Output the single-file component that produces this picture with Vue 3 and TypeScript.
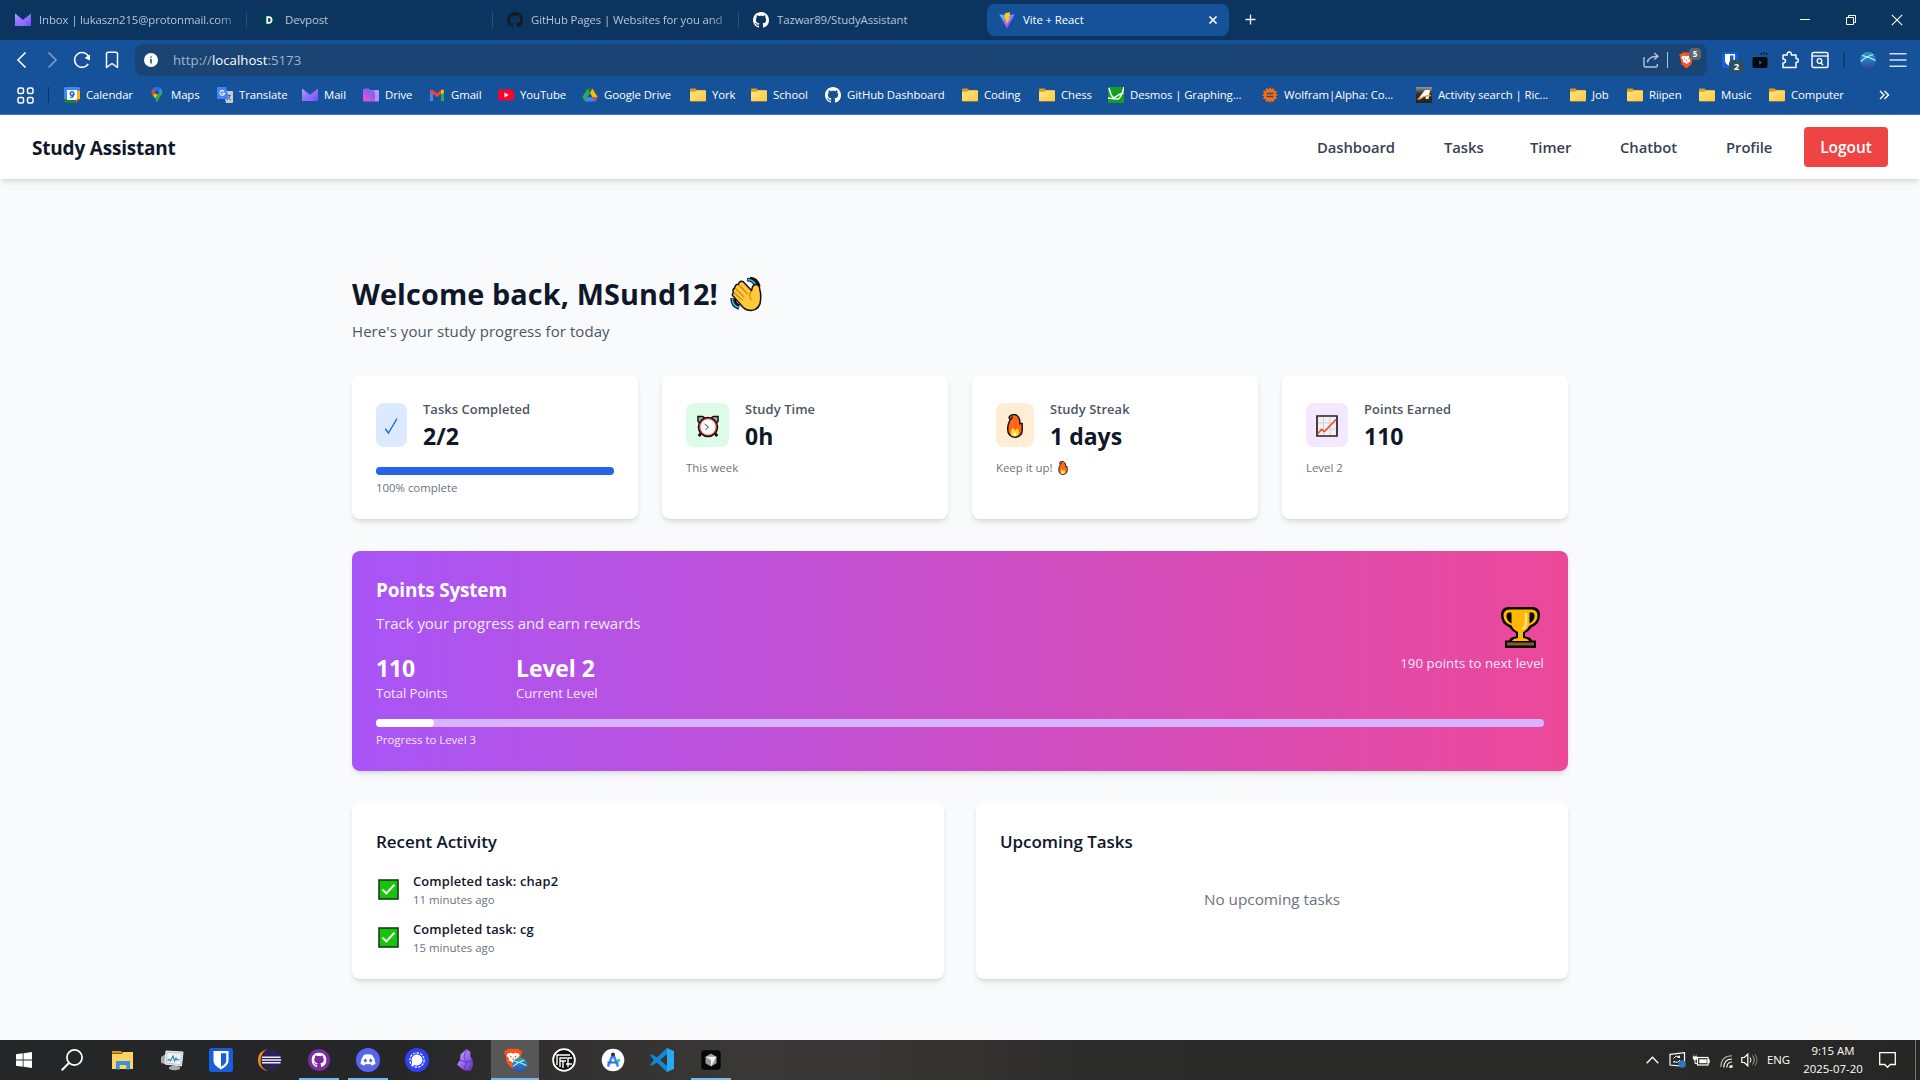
<script setup lang="ts">
interface Tab { icon: string; label: string; active?: boolean; faded?: boolean }
interface Bookmark { icon: string; label: string; width: number }
interface Stat { icon: string; tone: string; label: string; value: string; note: string; progress?: number; flame?: boolean }
interface TaskItem { icon: string; running?: boolean; active?: boolean }

const tabs: Tab[] = [
  { icon: 'proton', label: 'Inbox | lukaszn215@protonmail.com', faded: true },
  { icon: 'devpost', label: 'Devpost' },
  { icon: 'github-dark', label: 'GitHub Pages | Websites for you and', faded: true },
  { icon: 'github', label: 'Tazwar89/StudyAssistant' },
  { icon: 'vite', label: 'Vite + React', active: true },
]

const bookmarks: Bookmark[] = [
  { icon: 'calendar', label: 'Calendar', width: 85 },
  { icon: 'maps', label: 'Maps', width: 68 },
  { icon: 'translate', label: 'Translate', width: 85 },
  { icon: 'proton', label: 'Mail', width: 61 },
  { icon: 'pdrive', label: 'Drive', width: 66 },
  { icon: 'gmail', label: 'Gmail', width: 69 },
  { icon: 'youtube', label: 'YouTube', width: 84 },
  { icon: 'gdrive', label: 'Google Drive', width: 108 },
  { icon: 'folder', label: 'York', width: 61 },
  { icon: 'folder', label: 'School', width: 74 },
  { icon: 'github', label: 'GitHub Dashboard', width: 137 },
  { icon: 'folder', label: 'Coding', width: 77 },
  { icon: 'folder', label: 'Chess', width: 69 },
  { icon: 'desmos', label: 'Desmos | Graphing...', width: 154 },
  { icon: 'wolfram', label: 'Wolfram|Alpha: Co...', width: 154 },
  { icon: 'activity', label: 'Activity search | Ric...', width: 154 },
  { icon: 'folder', label: 'Job', width: 57 },
  { icon: 'folder', label: 'Riipen', width: 72 },
  { icon: 'folder', label: 'Music', width: 70 },
  { icon: 'folder', label: 'Computer', width: 110 },
]

const links: { label: string; width: number }[] = [
  { label: 'Dashboard', width: 79 },
  { label: 'Tasks', width: 38 },
  { label: 'Timer', width: 42 },
  { label: 'Chatbot', width: 58 },
  { label: 'Profile', width: 47 },
]

const stats: Stat[] = [
  { icon: 'check', tone: 'blue', label: 'Tasks Completed', value: '2/2', note: '100% complete', progress: 100 },
  { icon: 'clock', tone: 'green', label: 'Study Time', value: '0h', note: 'This week' },
  { icon: 'fire', tone: 'orange', label: 'Study Streak', value: '1 days', note: 'Keep it up!', flame: true },
  { icon: 'chart', tone: 'purple', label: 'Points Earned', value: '110', note: 'Level 2' },
]

const activity = [
  { title: 'Completed task: chap2', time: '11 minutes ago' },
  { title: 'Completed task: cg', time: '15 minutes ago' },
]

const taskbar: TaskItem[] = [
  { icon: 'explorer' },
  { icon: 'monitor' },
  { icon: 'bitwarden' },
  { icon: 'eclipse' },
  { icon: 'gh-desktop', running: true },
  { icon: 'discord', running: true },
  { icon: 'signal' },
  { icon: 'obsidian' },
  { icon: 'brave-app', active: true },
  { icon: 'monogram' },
  { icon: 'studio' },
  { icon: 'vscode' },
  { icon: 'cursor', running: true },
]

const levelProgress = 5
</script>

<template>
  <div class="screen">
    <svg class="sprite" width="0" height="0" aria-hidden="true">
      <defs>
        <linearGradient id="gProton" x1="0" y1="0" x2="1" y2="1"><stop offset="0" stop-color="#e3d9ff" /><stop offset=".4" stop-color="#9a7cff" /><stop offset="1" stop-color="#6d4aff" /></linearGradient>
        <linearGradient id="gDrive" x1="0" y1="1" x2="1" y2="0"><stop offset="0" stop-color="#f05ac0" /><stop offset=".6" stop-color="#8a5cf5" /><stop offset="1" stop-color="#b9a0ff" /></linearGradient>
        <linearGradient id="gFolder" x1="0" y1="0" x2="1" y2="1"><stop offset="0" stop-color="#ffe38a" /><stop offset="1" stop-color="#ffca3e" /></linearGradient>
        <linearGradient id="gVite" x1="0" y1="0" x2=".6" y2="1"><stop offset="0" stop-color="#41d1ff" /><stop offset="1" stop-color="#bd34fe" /></linearGradient>
        <linearGradient id="gOrb" x1="0" y1="0" x2="0" y2="1"><stop offset="0" stop-color="#22a6b8" /><stop offset=".5" stop-color="#2278bd" /><stop offset="1" stop-color="#3b48a8" /></linearGradient>
        <linearGradient id="gObs" x1="0" y1="0" x2="1" y2="1"><stop offset="0" stop-color="#c9b3ff" /><stop offset=".5" stop-color="#9a6af0" /><stop offset="1" stop-color="#5a2cb0" /></linearGradient>
        <linearGradient id="gAct" x1="0" y1="0" x2="0" y2="1"><stop offset="0" stop-color="#999" /><stop offset=".4" stop-color="#333" /><stop offset="1" stop-color="#222" /></linearGradient>
      </defs>
      <symbol id="proton" viewBox="0 0 16 16"><path d="M0 1.500 8 8l8-6.500V14H0z" fill="url(#gProton)" /><path d="M0 1.500 8 8l3-2.500v8.500H1.500A1.500 1.500 0 0 1 0 12.500z" fill="#8f6fff" opacity=".55" /></symbol>
      <symbol id="devpost" viewBox="0 0 16 16"><circle cx="8" cy="8" r="7.500" fill="#003e54" /><path d="M5.300 4.200h2.600c2.300 0 3.600 1.500 3.600 3.800s-1.400 3.800-3.700 3.800H5.300zm1.900 1.700v4.200h.6c1.200 0 1.800-.8 1.800-2.100s-.6-2.100-1.800-2.100z" fill="#fff" /></symbol>
      <symbol id="octo" viewBox="0 0 16 16"><path d="M8 0C3.580 0 0 3.580 0 8c0 3.540 2.290 6.530 5.470 7.590.4.070.55-.17.55-.38 0-.19-.01-.82-.01-1.490-2.010.37-2.530-.49-2.690-.94-.09-.23-.48-.94-.82-1.130-.28-.15-.68-.52-.01-.53.63-.01 1.080.58 1.230.82.72 1.210 1.870.87 2.330.66.07-.52.28-.87.51-1.070-1.780-.2-3.640-.89-3.640-3.950 0-.87.31-1.590.82-2.150-.08-.2-.36-1.020.08-2.120 0 0 .67-.21 2.200.82.64-.18 1.320-.27 2-.27s1.360.09 2 .27c1.530-1.040 2.200-.82 2.200-.82.44 1.100.16 1.920.08 2.120.51.56.82 1.270.82 2.150 0 3.070-1.870 3.750-3.650 3.950.29.25.54.73.54 1.480 0 1.070-.01 1.930-.01 2.200 0 .21.15.46.55.38A8.010 8.010 0 0 0 16 8c0-4.420-3.580-8-8-8z" /></symbol>
      <symbol id="github" viewBox="0 0 16 16"><use href="#octo" fill="#fff" /></symbol>
      <symbol id="github-dark" viewBox="0 0 16 16"><use href="#octo" fill="#161b22" /></symbol>
      <symbol id="vite" viewBox="0 0 16 16"><path d="M.3 2.200 7.500 15.600q.5.700 1 0L15.700 2.200 8.200 3.500z" fill="url(#gVite)" /><path d="M10.800.2 5.800 1.200 5.400 7.600l1.800-.4-.6 2.800 1.300-.4-1 4 4.400-7.600-2 .4 1.800-3.200z" fill="#ffc51b" /></symbol>
      <symbol id="calendar" viewBox="0 0 16 16"><path d="M0 1.500Q0 0 1.500 0H14.500Q16 0 16 1.500V12H0z" fill="#4285f4" /><path d="M12 4h4v8h-4z" fill="#fbbc04" /><path d="M0 12h12v4H1.500Q0 16 0 14.500z" fill="#188038" /><path d="M12 12h4l-4 4z" fill="#ea4335" /><path d="M3 3h10v10H3z" fill="#fff" /><circle cx="8" cy="6.500" r="1.800" fill="none" stroke="#1967d2" stroke-width="1.400" /><path d="M9.800 6.500Q10 10.500 6.300 10.500" fill="none" stroke="#1967d2" stroke-width="1.300" /></symbol>
      <symbol id="maps" viewBox="0 0 16 16"><path d="M8 16Q7 11.500 4 8.500 2.500 6.500 2.500 5.200L8 5.500 13.500 5Q13.500 7 11.500 9.200 9 12 8 16" fill="#34a853" /><path d="M2.500 5.300A5.500 5.500 0 0 1 4.200 1.500L8 5.300 4 8.600Q2.500 6.800 2.500 5.300" fill="#ea4335" /><path d="M4 1.600A5.500 5.500 0 0 1 11.500 1.200L8 5.300z" fill="#1a73e8" /><path d="M11.500 1.200A5.500 5.500 0 0 1 13.500 5.300L8 5.500z" fill="#4285f4" /><path d="M4 8.600 8 4l1.500 2.500L6 11z" fill="#fbbc04" /><circle cx="8" cy="5.400" r="2" fill="#155299" /></symbol>
      <symbol id="translate" viewBox="0 0 16 16"><path d="M6 4h9.300q.7 0 .7.700v10.600q0 .7-.7.700H9z" fill="#c9cdd2" /><path d="M9 8.500h5M11.500 7.500v1M13 8.500Q12 12 9.500 13M10 9.500q1.500 2.500 4 3.500" stroke="#5f6368" fill="none" /><path d="M.7 0h8.300l3 12H.7Q0 12 0 11.300V.7Q0 0 .7 0" fill="#4285f4" /><path d="M7 4.500A2.300 2.300 0 1 0 7.500 6.300H5.300" fill="none" stroke="#fff" stroke-width="1.100" /></symbol>
      <symbol id="pdrive" viewBox="0 0 16 16"><path d="M0 3Q0 1.500 1.500 1.500h4l2 1.500H14.500Q16 3 16 4.500V13q0 1.500-1.500 1.500h-13Q0 14.500 0 13z" fill="url(#gDrive)" /><path d="M12 3h2.500Q16 3 16 4.500V13q0 1.500-1.500 1.500H12z" fill="#c7b5ff" opacity=".6" /></symbol>
      <symbol id="gmail" viewBox="0 0 16 16"><path d="M1 3v11h3V6z" fill="#4285f4" /><path d="M12 6v8h3V3z" fill="#34a853" /><path d="M1 5.500V3.700Q2 1.500 4 3l4 3.200L12 3v4l-4 3.200-4-3.200z" fill="#ea4335" /><path d="M12 3q2-1.500 3 .7v1.800L12 7.500z" fill="#fbbc04" /></symbol>
      <symbol id="youtube" viewBox="0 0 16 16"><rect y="2.500" width="16" height="11" rx="2.500" fill="#f03" /><path d="m6.500 5.600 4.200 2.400-4.200 2.400z" fill="#fff" /></symbol>
      <symbol id="gdrive" viewBox="0 0 16 16"><path d="M5.500 1.500 8 6 3 14.500.3 10.200z" fill="#34a853" /><path d="M5.500 1.500h5L8 6z" fill="#188038" /><path d="m10.500 1.500 5.200 8.700H10.600L8 6z" fill="#fbbc04" /><path d="M5.500 10.200h10.200L13.200 14.500H3z" fill="#4285f4" /><path d="M10.600 10.200h5.100l-2.500 4.300z" fill="#ea4335" /></symbol>
      <symbol id="folder" viewBox="0 0 16 16"><path d="M0 2.500Q0 1.500 1 1.500h4.500L7 3H15q1 0 1 1v9.500q0 1-1 1H1q-1 0-1-1z" fill="#d9a01c" /><path d="M0 5 6 4.500 7 3.500h8.200q.8 0 .8.800v8.900q0 .8-.8.800H.8Q0 14 0 13.200z" fill="url(#gFolder)" /></symbol>
      <symbol id="desmos" viewBox="0 0 16 16"><path d="M0 0h16v16H0z" fill="#11a01f" /><path d="M1 1q3 12 6.500 9t8-4M16 0Q13 12 9.500 12T0 11" stroke="#fff" stroke-width="1.500" fill="none" /></symbol>
      <symbol id="wolfram" viewBox="0 0 16 16"><path d="M8 0 9.400 2.300 12 .9l.2 2.900 2.900.2-1.400 2.500L16 8l-2.300 1.500 1.400 2.500-2.900.2-.2 2.900-2.600-1.400L8 16l-1.400-2.300L4 15.100l-.2-2.900-2.900-.2 1.400-2.500L0 8l2.300-1.500L.9 4l2.900-.2L4 .9l2.600 1.400z" fill="#ff6a0a" /><path d="M4.500 5.700h7v1.500h-7zM4.500 8.800h7v1.500h-7z" fill="#155299" /></symbol>
      <symbol id="activity" viewBox="0 0 16 16"><path d="M0 0h16v16H0z" fill="url(#gAct)" /><path d="M2 12 9 3h5l-1.500 9h-3l.5-3-2 .5L5 12z" fill="#fff" /><path d="M1 12.500Q8 7.500 15 8v1.300Q7 9.500 3 13z" fill="#f59a1c" /></symbol>
      <symbol id="shield" viewBox="0 0 16 16"><path d="M4 1h8l1 1.300 1.300-.2.500 2L14 5.500l-1.300 6.200Q12 13 8 16 4 13 3.300 11.700L2 5.500 1.200 4.100l.5-2L3 2.300z" fill="#fb5420" /><path d="M4 4.300 6.500 4 8 4.600 9.500 4l2.500.3 1 1.700-2 2.200.5 1.300-2 1L8 11.800l-1.500-1.300-2-1L5 8.200 3 6z" fill="#fff" /><path d="m5 6 1.800.5-.3 1.300zM11 6l-1.800.5.3 1.300zM8 7l.5 2-.5.7-.5-.7z" fill="#fb5420" /></symbol>
      <symbol id="bitwarden" viewBox="0 0 24 24"><rect width="24" height="24" rx="2.500" fill="#175ddc" /><path d="M4.500 3h15v10q0 4.500-7.500 8.500Q4.500 17.500 4.500 13z" fill="#fff" /><path d="M12 5.300h5.200V13q0 2.800-5.200 5.800z" fill="#175ddc" /></symbol>
      <symbol id="orb" viewBox="0 0 16 16"><circle cx="8" cy="8" r="8" fill="url(#gOrb)" /><path d="M2 3.500Q8 4.500 15.500 8.500M.8 9.500Q5.500 5 13 2.500" stroke="#c8f1ff" stroke-width="1.200" fill="none" /></symbol>
      <symbol id="fire" viewBox="0 0 18 27"><path d="M9.500.8Q5.500 0 3 2.500q-1.500 2 .8 3.800Q.8 10.500.8 17.500.8 25.500 9 26.200 17.200 25.500 17.200 17.500L17 10.500l-2.500.5Q15 3 9.500.8" fill="#ff6718" stroke="#111" stroke-width="1.600" stroke-linejoin="round" /><path d="M4.500 19.500Q5.500 17 6.500 15.500L9.300 18.500l3-2.500q3 8.500-3.300 9.200-6 .2-4.500-5.700" fill="#ffd72e" /><path d="M8.700 20q3 3.500 0 5-3-1.500 0-5" fill="#fff6c9" /><path d="M4 6.300Q6.500 5 5.500 2.500" stroke="#111" fill="none" stroke-width="1.300" /></symbol>
      <symbol id="check" viewBox="0 0 15 18"><path d="m1.200 11.700 3.300 4.300L13 1.500" fill="none" stroke="#2563eb" stroke-width="1.400" /></symbol>
      <symbol id="clock" viewBox="0 0 24 24"><path d="M1.500 6.500V1.500h5l2 1.500L4 9zM22.500 6.500V1.500h-5l-2 1.500L20 9z" fill="#aaa" stroke="#111" stroke-width="1.500" /><path d="m4.500 19-2 3M19.500 19l2 3" stroke="#111" stroke-width="3" /><circle cx="12" cy="12.500" r="10" fill="#e8402c" stroke="#111" stroke-width="1.500" /><circle cx="12" cy="12.500" r="8" fill="#fff" /><path d="M8.500 9.300 12.500 12.500l-3 3" fill="none" stroke="#333" /><circle cx="12" cy="12.500" r="6.500" fill="none" stroke="#bbb" stroke-dasharray=".8 2.600" /></symbol>
      <symbol id="chart" viewBox="0 0 22 22"><path d="M1 1h20v20H1z" fill="#f1f1f1" stroke="#222" stroke-width="1.700" /><path d="M7.500 2v18M14 2v18M2 8h18M2 14h18" stroke="#d1d1d1" /><path d="m1.500 19 4-4.500 3 2L20 4.500" fill="none" stroke="#ee4433" stroke-width="1.600" /></symbol>
      <symbol id="done" viewBox="0 0 22 22"><path d="M1 1h20v20H1z" fill="#16c60c" stroke="#1b2b1b" stroke-width="1.500" /><path d="m4.700 11 4 4L17.200 6" stroke="#fff" stroke-width="2" fill="none" /></symbol>
      <symbol id="explorer" viewBox="0 0 24 24"><path d="M1 3h9l2 2.500H1z" fill="#d99a12" /><path d="M1 6h10l1-2h10v17H1z" fill="#ffd263" /><path d="M5 21.500V13h14v8.500h-3.700V17H8.700v4.500z" fill="#3c92d6" /></symbol>
      <symbol id="monitor" viewBox="0 0 24 24"><path d="m1 9 8-5v13l-8-2zM9 19q5-3 11 0v2q-5 2.500-11 0z" fill="#aaa" /><path d="m6 3 17 1-1.500 14L5 16z" fill="#c9ccce" stroke="#eee" /><path d="m7.500 5 13.800.7-1.300 10.600L7 14.500z" fill="#eaf4fb" /><path d="m7.500 12.500 2-1 1 1.500 2.500-5 1.500 5 1.500-3 1 2 2.500-.5" fill="none" stroke="#297fae" stroke-width="1.100" /><path d="M1.500 10.500h1.500v1.500H1.500z" fill="#6d4" /></symbol>
      <symbol id="eclipse" viewBox="0 0 24 24"><path d="M10 1Q0 3 0 12t10 11Q2 20 2.500 12T10 1" fill="#f7941e" /><circle cx="13.300" cy="12" r="10.500" fill="#2c2255" /><path d="M4 9.200h18.500M3.700 12h19.500M4 14.800h18.500" stroke="#f2f0fa" stroke-width="1.600" /></symbol>
      <symbol id="gh-desktop" viewBox="0 0 24 24"><circle cx="12" cy="12" r="11" fill="#7b2da0" /><use href="#octo" x="4.500" y="4.500" width="15" height="15" fill="#fff" /></symbol>
      <symbol id="discord" viewBox="0 0 24 24"><circle cx="12" cy="12" r="12" fill="#5865f2" /><path d="M8 6.800q4-1 8 0 3 3.700 3.500 9-2 1.600-4 1.700l-1-1.500q-2.500.6-5 0l-1 1.500q-2-.1-4-1.700Q5 10.500 8 6.800" fill="#fff" /><ellipse cx="9.300" cy="12.500" rx="1.500" ry="1.700" fill="#5865f2" /><ellipse cx="14.700" cy="12.500" rx="1.500" ry="1.700" fill="#5865f2" /></symbol>
      <symbol id="signal" viewBox="0 0 24 24"><circle cx="12" cy="12" r="12" fill="#3040f4" /><circle cx="12" cy="12" r="7.200" fill="none" stroke="#fff" stroke-width="1.200" stroke-dasharray="2.500 1.200" /><path d="m6.300 18 .8-3.500A5.500 5.500 0 1 1 9.700 17z" fill="#fff" /></symbol>
      <symbol id="obsidian" viewBox="0 0 24 24"><path d="M12.500 1 6.500 6.500 6 12l-3 4.500L9.500 22l7 1 2.500-5-.2-5.500-2.300-4V4z" fill="url(#gObs)" /><path d="m12.500 1-2.500 8 2.500 5.500L9.500 22M12.500 14.500l6-2M6 12l6.500 2.500" stroke="#5a2cb0" fill="none" stroke-width=".8" /></symbol>
      <symbol id="brave-app" viewBox="0 0 24 26"><use href="#shield" x="-1.500" y="-1" width="23" height="24" /><use href="#orb" x="9" y="10.500" width="16" height="16" /></symbol>
      <symbol id="monogram" viewBox="0 0 24 24"><circle cx="12" cy="12" r="10.900" fill="#111" stroke="#fff" stroke-width="1.800" /><path d="M5 17V7h13M8 19v-9h7M11 20v-7M8 13h6M16 19v-9h4M14 16h6" fill="none" stroke="#fff" stroke-width="1.400" /></symbol>
      <symbol id="studio" viewBox="0 0 24 24"><circle cx="12" cy="12" r="11.300" fill="#fff" /><path d="M12 6 7 18.500M12 6l5 12.500" stroke="#4285f4" stroke-width="2.600" /><path d="M6.500 14.500h11" stroke="#356fd6" stroke-width="2" /><circle cx="12" cy="6.500" r="2" fill="#333" /><circle cx="17.500" cy="12.500" r="1.800" fill="#3ddc84" /></symbol>
      <symbol id="vscode" viewBox="0 0 24 24"><path d="M17 0 6.700 9.500 2.300 6.200.4 7.200v9.600l1.900 1 4.400-3.300L17 24v-6.200L10 12l7-5.800z" fill="#1687cf" /><path d="m17 0 7 3v18l-7 3z" fill="#29a9f2" /><path d="M.4 7.200 3.500 12 .4 16.800z" fill="#2b2b2d" /></symbol>
      <symbol id="cursor" viewBox="0 0 24 24"><rect x="2.300" y="2.300" width="19.400" height="19.400" rx="3.500" fill="#060606" /><path d="m12 5.500 5.500 3.200v6.600L12 18.500l-5.500-3.200V8.700z" fill="#9a9a9a" /><path d="M6.500 8.700h11L12 18.500v-6.500z" fill="#f2f2f2" /></symbol>
    </svg>

    <header class="browser">
      <div class="tabstrip">
        <div class="tabs">
          <div v-for="tab in tabs" :key="tab.label" class="tab" :class="{ active: tab.active }">
            <svg class="i16"><use :href="'#' + tab.icon" /></svg>
            <span class="tab-label" :class="{ faded: tab.faded }">{{ tab.label }}</span>
            <svg v-if="tab.active" class="tab-close" viewBox="0 0 10 10"><path d="m1.500 1.500 7 7m0-7-7 7" stroke="#fff" stroke-width="1.700" /></svg>
          </div>
          <svg class="new-tab" viewBox="0 0 12 12"><path d="M6 .5v11M.5 6h11" stroke="#e5edf6" stroke-width="1.500" /></svg>
        </div>
        <div class="window-buttons">
          <svg viewBox="0 0 12 12"><path d="M1 5.500h10" stroke="#fff" /></svg>
          <svg viewBox="0 0 12 12"><path d="M1.500 3.500h7v7h-7zM3.500 3.500v-2h7v7h-2" fill="none" stroke="#fff" /></svg>
          <svg viewBox="0 0 12 12"><path d="m.8.800 10.400 10.400m0-10.400L.8 11.200" stroke="#fff" stroke-width="1.100" /></svg>
        </div>
      </div>

      <div class="toolbar">
        <div class="nav-buttons">
          <svg viewBox="0 0 18 18"><path d="M12.500 1.500 5 9l7.500 7.500" fill="none" stroke="#fff" stroke-width="1.600" /></svg>
          <svg viewBox="0 0 18 18" class="dim"><path d="M5.500 1.500 13 9l-7.500 7.500" fill="none" stroke="#fff" stroke-width="1.600" /></svg>
          <svg viewBox="0 0 18 18"><path d="M15.800 6A7.400 7.400 0 1 0 15.200 13" fill="none" stroke="#fff" stroke-width="1.600" /><path d="M17 3.500v6l-5.500-2.500z" fill="#fff" /></svg>
          <svg viewBox="0 0 18 18"><path d="M3.500 16.500V3q0-1.800 1.800-1.800h7.400q1.800 0 1.800 1.800v13.500L9 12.500z" fill="none" stroke="#fff" stroke-width="1.500" stroke-linejoin="round" /></svg>
        </div>
        <div class="address">
          <svg class="info" viewBox="0 0 14 14"><circle cx="7" cy="7" r="7" fill="#fff" /><path d="M7 6v4.500M7 3.500v1.300" stroke="#194474" stroke-width="1.500" /></svg>
          <span class="url">http://<b>localhost</b>:5173</span>
          <svg class="share" viewBox="0 0 16 16"><path d="M1 5v8.700q0 1.300 1.300 1.300H13q1.300 0 1.300-1.300V12M4.500 10.500Q5 4.500 14.500 4.200M11.300 1l3.700 3.200-3.700 3.300" fill="none" stroke="#b4c3d5" stroke-width="1.400" /></svg>
          <i class="address-rule"></i>
          <span class="brave"><svg viewBox="0 0 16 16"><use href="#shield" /></svg><em>5</em></span>
        </div>
        <div class="extensions">
          <span class="vault"><svg class="i16"><use href="#bitwarden" /></svg><em>2</em></span>
          <svg class="i18 ext-tv" viewBox="0 0 18 18"><rect x="1.500" y="6" width="15" height="11" rx="2" fill="#05080c" /><path d="m8 9.300 3.300 2.200L8 13.700z" fill="#155299" /><path d="m9.500 2.500 1.500 1M13 1v2m3-1-1 1.500" stroke="#05080c" stroke-width="1.200" /></svg>
          <svg class="i18 ext-puzzle" viewBox="0 0 18 18"><path d="M2 4h4.200q-.5-2.800 2-3 2.600.2 2.100 3H15v3.500q2.300 0 2.300 2T15 11.600V16.500H2V12q2.500 0 2.500-2T2 8z" fill="none" stroke="#fff" stroke-width="1.500" stroke-linejoin="round" /></svg>
          <svg class="i18 ext-search" viewBox="0 0 18 18"><rect x="1" y="1.500" width="16" height="15" rx="1.500" fill="none" stroke="#fff" stroke-width="1.400" /><path d="M1 5h16" stroke="#fff" stroke-width="1.300" /><circle cx="8.500" cy="10" r="2.300" fill="none" stroke="#fff" stroke-width="1.300" /><path d="m10 12 2 2" stroke="#fff" stroke-width="1.500" /></svg>
          <i class="ext-rule"></i>
          <svg class="i16 ext-orb"><use href="#orb" /></svg>
          <svg class="i18 ext-menu" viewBox="0 0 18 18"><path d="M.5 2.700h17M.5 9h17M.5 15.300h17" stroke="#d7e2f0" stroke-width="1.500" /></svg>
        </div>
      </div>

      <div class="bookmarks">
        <svg class="apps" viewBox="0 0 17 17"><g fill="none" stroke="#fff" stroke-width="1.500"><rect x="1" y="1" width="5.500" height="5.500" rx="1.500" /><rect x="10.500" y="1" width="5.500" height="5.500" rx="1.500" /><rect x="1" y="10.500" width="5.500" height="5.500" rx="1.500" /><rect x="10.500" y="10.500" width="5.500" height="5.500" rx="1.500" /></g></svg>
        <i class="bookmark-rule"></i>
        <div v-for="mark in bookmarks" :key="mark.label" class="bookmark" :style="{ width: mark.width + 'px' }">
          <svg class="i16"><use :href="'#' + mark.icon" /></svg><span>{{ mark.label }}</span>
        </div>
        <svg class="more" viewBox="0 0 10 10"><path d="m1 1 4 4-4 4M5.500 1l4 4-4 4" fill="none" stroke="#fff" stroke-width="1.400" /></svg>
      </div>
    </header>

    <nav class="site-nav">
      <div class="brand">Study Assistant</div>
      <div class="links">
        <a v-for="link in links" :key="link.label" :style="{ width: link.width + 'px' }">{{ link.label }}</a>
        <button type="button" class="logout">Logout</button>
      </div>
    </nav>

    <main class="page">
      <div class="content">
        <h1>
          <span>Welcome back, MSund12!</span>
          <svg class="wave" viewBox="0 0 32 34"><path d="M17 2.500q8 0 9 8M20 1.500q7 .5 9 8M2 21q0 8 7 10M4 22q1 6 5.500 7" stroke="#111" stroke-width="3.400" fill="none" /><path d="M17.500 2.300q8 1 8.700 8M2.300 21.500q0 7 6.500 9" stroke="#35bce6" stroke-width="1.700" fill="none" /><path d="M4 20q-3-2.500-.5-4.500-1.500-3 1.200-4.500Q5 7 8.500 7.200 9.500 3 13.500 5l8 8.500 1-3.500q1-3 4-2.500 3.500 1 3.200 5 1.300 3 1 9 0 11-9.500 12-5 0-8-3z" fill="#ffc83d" stroke="#111" stroke-width="1.500" /><path d="m5.500 11.500 8.500 8.500M9 8l9 9.500M4.500 16l8 7.500M21.500 14q-3.500 4 0 9" stroke="#d48b0c" stroke-width="1.200" fill="none" /></svg>
        </h1>
        <p class="subtitle">Here's your study progress for today</p>

        <section class="stats">
          <article v-for="stat in stats" :key="stat.label" class="card">
            <div class="stat-top">
              <div class="stat-icon" :class="stat.tone"><svg><use :href="'#' + stat.icon" /></svg></div>
              <div>
                <div class="stat-label">{{ stat.label }}</div>
                <div class="stat-value">{{ stat.value }}</div>
              </div>
            </div>
            <div v-if="stat.progress" class="progress"><i :style="{ width: stat.progress + '%' }"></i></div>
            <div class="note" :class="{ tight: stat.progress }">{{ stat.note }}<svg v-if="stat.flame" class="mini-fire"><use href="#fire" /></svg></div>
          </article>
        </section>

        <section class="points">
          <div class="points-top">
            <div>
              <h2>Points System</h2>
              <p>Track your progress and earn rewards</p>
              <div class="totals">
                <div><strong>110</strong><span>Total Points</span></div>
                <div><strong>Level 2</strong><span>Current Level</span></div>
              </div>
            </div>
            <div class="reward">
              <svg viewBox="0 0 39 41"><path d="M7 0h25q7 .5 7 8 0 9-8.500 12.500-2.500 3.500-6.500 5.500v3.500q6 .5 7 4h4V41H4v-7.500h4q1-3.500 7-4V26q-4-2-6.500-5.500Q0 17 0 8 0 .5 7 0" fill="#060606" /><path d="M8.500 2.500h22q6 .5 6 6 0 7-8 10-2 4.500-6.500 6.500v6q5 .5 6 3H11q1-2.500 6-3v-6q-4.500-2-6.500-6.500-8-3-8-10 0-5.500 6-6" fill="#ffb900" /><path d="M10.500 5.500v11Q5.500 14 5.500 9q0-3.500 2.500-3.500zM28.500 5.500v11Q33.500 14 33.500 9q0-3.500-2.500-3.500z" fill="#060606" /><path d="M25 6v9q0 6-4 6.500" stroke="#ffe18a" stroke-width="2.500" fill="none" /><path d="M6 35.500h27v3H6z" fill="#8e562e" /></svg>
              <span>190 points to next level</span>
            </div>
          </div>
          <div class="level-bar"><i :style="{ width: levelProgress + '%' }"></i></div>
          <div class="level-note">Progress to Level 3</div>
        </section>

        <section class="bottom">
          <article class="card">
            <h3>Recent Activity</h3>
            <ul>
              <li v-for="item in activity" :key="item.title">
                <svg class="done"><use href="#done" /></svg>
                <div><div class="item-title">{{ item.title }}</div><div class="item-time">{{ item.time }}</div></div>
              </li>
            </ul>
          </article>
          <article class="card">
            <h3>Upcoming Tasks</h3>
            <p class="empty">No upcoming tasks</p>
          </article>
        </section>
      </div>
    </main>

    <footer class="taskbar">
      <div class="start"><svg class="win" viewBox="0 0 16 16"><path d="M0 2.300 6.700 1.300v6.300H0zM7.500 1.200 16 0v7.600H7.500zM0 8.400h6.700v6.300L0 13.700zM7.500 8.400H16V16l-8.500-1.200z" fill="#fff" /></svg></div>
      <div class="start"><svg class="find" viewBox="0 0 22 22"><circle cx="13.500" cy="8.500" r="7.600" fill="none" stroke="#fff" stroke-width="1.700" /><path d="m8 14-7.300 7.300" stroke="#fff" stroke-width="2" /></svg></div>
      <div class="apps-row">
        <div v-for="app in taskbar" :key="app.icon" class="app" :class="{ running: app.running, current: app.active }"><svg><use :href="'#' + app.icon" /></svg></div>
      </div>
      <div class="tray">
        <svg class="t-chev" viewBox="0 0 13 8"><path d="m.7 7.200 5.800-6 5.800 6" fill="none" stroke="#fff" stroke-width="1.300" /></svg>
        <svg class="t-sync" viewBox="0 0 17 16"><path d="M1 2.300 15.500.7v13.600L1 13z" fill="none" stroke="#fff" stroke-width="1.200" /><path d="M4.500 6.500q3-4 6-1V3.500m0 2H8.500M11 8q-3 4-6 1v2" fill="none" stroke="#fff" /><circle cx="13" cy="12" r="3.700" fill="#2f77c4" /></svg>
        <svg class="t-batt" viewBox="0 0 17 13"><rect x="4.500" y="3.500" width="10.500" height="7.500" fill="none" stroke="#fff" stroke-width="1.200" /><path d="M6.500 5.500h7v3.500h-7zM15 5.500h1.500v3.500H15zM0 2.500h4V4q0 2-2 2T0 4zM.8.500v2M3.200.500v2" fill="#fff" stroke="#fff" stroke-width=".4" /><path d="M2 6v3.500h2.500" fill="none" stroke="#fff" /></svg>
        <svg class="t-wifi" viewBox="0 0 13 13"><g fill="none" stroke="#fff" stroke-width="1.100"><path d="M.8 12Q1 1 12 .8" opacity=".65" /><path d="M3.800 12.500Q4 4 12 4M6.800 12.500Q7 7 12 7" /></g><path d="M9 12.800Q9 10 12.500 10v2.800z" fill="#fff" /></svg>
        <svg class="t-vol" viewBox="0 0 17 14"><path d="M.8 4.500h2.500l3.500-3.300v11.600L3.300 9.500H.8z" fill="none" stroke="#fff" stroke-width="1.200" /><g fill="none" stroke="#fff"><path d="M9 4.500q2 2.500 0 5" /><path d="M11.500 2.500q3.500 4.500 0 9" opacity=".6" /><path d="M13.800 1q4.500 6 0 12" opacity=".4" /></g></svg>
        <span class="lang">ENG</span>
        <div class="datetime"><span class="time">9:15 AM</span><span class="date">2025-07-20</span></div>
        <svg class="t-note" viewBox="0 0 17 16"><path d="M.7.700h15.600v11.800h-5L8.500 15.300l-2.800-2.800h-5z" fill="none" stroke="#fff" stroke-width="1.300" /></svg>
        <i class="peek"></i>
      </div>
    </footer>
  </div>
</template>

<style>
body { margin: 0; overflow: hidden; }
</style>

<style scoped>
* { box-sizing: border-box; }
.screen { width: 1920px; height: 1080px; display: flex; flex-direction: column; font-family: "Open Sans", "Noto Sans", sans-serif; background: #f9fafb; overflow: hidden; }
.sprite { position: absolute; }
svg { flex: none; display: block; overflow: visible; }
h1, h2, h3, p, ul { margin: 0; padding: 0; }
.i16 { width: 16px; height: 16px; }
.i18 { width: 18px; height: 18px; }

.browser { height: 115px; background: #155299; border-bottom: 1px solid #4078b3; color: #fff; font-size: 11.400px; letter-spacing: -.1px; white-space: nowrap; }
.tabstrip { height: 40px; background: #0b345e; display: flex; justify-content: space-between; }
.tabs { display: flex; padding: 4px 0 4px 1px; }
.tab { width: 246px; height: 32px; padding-left: 14px; display: flex; align-items: center; gap: 8px; color: #b6c5d8; }
.tab:nth-child(-n+3) { background: linear-gradient(#155299, #155299) right 8px / 1px 16px no-repeat; }
.tab.active { width: 242px; margin-left: 2px; padding: 0 11px 0 12px; background: #155299; border-radius: 8px; color: #fff; }
.tab-label { width: 197px; line-height: 20px; }
.tab-label.faded { letter-spacing: -.13px; -webkit-mask-image: linear-gradient(90deg, #000 90%, rgba(0, 0, 0, .35) 100%); mask-image: linear-gradient(90deg, #000 90%, rgba(0, 0, 0, .35) 100%); }
.tab-close { width: 10px; height: 10px; }
.tab.active .tab-label { flex: 1; width: auto; }
.new-tab { width: 11px; height: 11px; margin: 10px 0 0 16px; }
.window-buttons { display: flex; align-items: center; gap: 34px; padding-right: 17px; }
.window-buttons svg { width: 12px; height: 12px; }

.toolbar { height: 40px; display: flex; align-items: center; }
.nav-buttons { display: flex; gap: 12px; width: 135px; padding-left: 13px; }
.nav-buttons svg { width: 18px; height: 18px; }
.dim { opacity: .45; }
.address { width: 1572px; height: 32px; border-radius: 8px; background: #194474; display: flex; align-items: center; padding-left: 9px; font-size: 13.200px; color: #a3b5ca; }
.info { width: 14px; height: 14px; margin-right: 15px; }
.url { flex: 1; letter-spacing: .03px; }
.url b { font-weight: 400; color: #fff; }
.share { width: 16px; height: 16px; margin-right: 8px; }
.address-rule { width: 1px; height: 16px; background: #b4c3d5; margin-right: 10px; }
.brave { position: relative; width: 29px; }
.brave svg { width: 17px; height: 18px; }
.brave em { position: absolute; left: 11px; top: -3px; width: 12px; height: 12px; border-radius: 4px; background: #5d6573; color: #fff; font: 700 8px/12px "Open Sans", sans-serif; text-align: center; }
.extensions { display: flex; align-items: center; padding-left: 15px; }
.vault { position: relative; margin-right: 13px; }
.vault em { position: absolute; left: 7px; top: 8px; width: 15px; height: 13px; border-radius: 4px; background: #2b5160; color: #fff; font: 700 9.500px/13px "Open Sans", sans-serif; text-align: center; }
.ext-puzzle { margin-left: 12px; }
.ext-search { margin-left: 12px; }
.ext-rule { width: 2px; height: 16px; background: #0f3d70; margin: 0 15px 0 14px; }
.ext-menu { margin-left: 13px; }

.bookmarks { height: 34px; display: flex; align-items: center; padding: 0 0 4px 17px; }
.apps { width: 17px; height: 17px; }
.bookmark-rule { width: 1px; height: 16px; background: #0b345e; margin: 0 15px 0 14px; }
.bookmark { display: flex; align-items: center; gap: 6px; flex: none; }
.bookmark span { margin-top: -2px; }
.more { width: 10px; height: 10px; }

.site-nav { height: 64px; flex: none; background: #fff; padding: 0 32px; display: flex; align-items: center; justify-content: space-between; box-shadow: 0 4px 6px -1px #0000001a, 0 2px 4px -2px #0000001a; z-index: 1; color: #0f172a; white-space: nowrap; }
.brand { font-size: 19px; font-weight: 700; letter-spacing: -.2px; padding-top: 2px; }
.links { display: flex; align-items: center; }
.links a { margin-right: 48px; padding-left: 1px; color: #374151; font-size: 14.800px; letter-spacing: -.05px; font-weight: 600; white-space: nowrap; }
.links a:nth-last-child(2) { margin-right: 32px; }
.logout { width: 84px; height: 40px; padding: 2px 0 0; border: 0; border-radius: 4px; background: #ef4444; color: #fff; font: 600 15.400px/24px "Open Sans", sans-serif; }

.page { flex: 1; display: flex; justify-content: center; padding-top: 96px; white-space: nowrap; }
.content { width: 1216px; }
h1 { display: flex; align-items: center; height: 36px; font-size: 28.800px; font-weight: 700; color: #0f172a; letter-spacing: .12px; }
.wave { width: 32px; height: 34px; margin: 2px 0 0 12px; }
.subtitle { margin: 8px 0 32px; font-size: 15px; line-height: 24px; color: #4b5563; letter-spacing: .07px; }
.card { background: #fff; border-radius: 8px; padding: 24px; box-shadow: 0 4px 6px -1px #0000001a, 0 2px 4px -2px #0000001a; }
.stats { display: flex; gap: 24px; margin-bottom: 32px; }
.stats .card { width: 286px; height: 144px; }
.stat-top { display: flex; align-items: center; gap: 16px; }
.stat-icon { height: 44px; border-radius: 8px; display: flex; align-items: center; justify-content: center; padding-top: 2px; }
.blue { width: 31px; background: #dbeafe; }
.blue svg { width: 15px; height: 18px; }
.green { width: 43px; background: #dcfce7; }
.green svg { width: 24px; height: 23px; }
.orange { width: 38px; background: #ffedd5; }
.orange svg { width: 18px; height: 24px; }
.purple { width: 42px; background: #f3e8ff; }
.purple svg { width: 22px; height: 22px; }
.stat-label { font-size: 12.900px; font-weight: 600; line-height: 20px; color: #4b5563; letter-spacing: .08px; }
.stat-value { font-size: 23px; font-weight: 700; height: 32px; line-height: 34px; color: #0f172a; }
.progress { height: 8px; border-radius: 4px; margin-top: 16px; background: #e5e7eb; }
.progress i { display: block; height: 8px; border-radius: 4px; background: #2563eb; }
.note { display: flex; align-items: center; margin-top: 9px; font-size: 11.400px; line-height: 16px; color: #6b7280; }
.note.tight { margin-top: 5px; }
.mini-fire { width: 10px; height: 14px; margin-left: 5px; }

.points { height: 220px; border-radius: 8px; padding: 24px; background: linear-gradient(90deg, #a855f7, #ec4899); color: #fff; box-shadow: 0 4px 6px -1px #0000001a, 0 2px 4px -2px #0000001a; margin-bottom: 32px; }
.points-top { display: flex; justify-content: space-between; align-items: center; height: 128px; }
.points h2 { font-size: 19px; height: 28px; line-height: 30px; font-weight: 700; letter-spacing: -.2px; }
.points p { margin: 8px 0 16px; font-size: 15px; line-height: 24px; color: #f3e8ff; letter-spacing: -.05px; }
.totals { display: flex; }
.totals div { width: 140px; }
.totals strong { display: block; font-size: 23px; height: 32px; line-height: 34px; letter-spacing: -.1px; }
.totals span, .reward span { display: block; font-size: 13.200px; line-height: 20px; color: #f3e8ff; }
.totals span { letter-spacing: -.07px; }
.reward { display: flex; flex-direction: column; align-items: flex-end; }
.reward span { letter-spacing: .05px; }
.reward svg { width: 39px; height: 41px; margin: 2px 4px 5px 0; }
.level-bar { height: 8px; margin-top: 16px; border-radius: 4px; background: #d8b4fe; }
.level-bar i { display: block; height: 8px; border-radius: 4px; background: #fff; }
.level-note { margin-top: 5px; font-size: 11.400px; line-height: 16px; color: #f3e8ff; }

.bottom { display: flex; gap: 32px; }
.bottom .card { width: 592px; height: 176px; }
.bottom h3 { font-size: 17px; font-weight: 600; height: 28px; line-height: 30px; color: #0f172a; margin-bottom: 16px; letter-spacing: -.05px; }
.bottom ul { list-style: none; display: flex; flex-direction: column; gap: 12px; }
.bottom li { display: flex; align-items: center; height: 36px; }
.done { width: 21px; height: 21px; margin: 0 14px 0 2px; }
.item-title { font-size: 12.900px; line-height: 20px; font-weight: 600; color: #0f172a; letter-spacing: .16px; }
.item-time { font-size: 11.400px; height: 16px; line-height: 18px; color: #6b7280; }
.empty { padding-top: 16px; font-size: 15.300px; line-height: 24px; text-align: center; color: #6b7280; }

.taskbar { height: 40px; flex: none; display: flex; background: linear-gradient(90deg, #252628 0, #252628 400px, #32312f 560px, #3a3836 740px, #353431 950px, #2b2b29 1100px, #292a28 1600px, #262725 1920px); color: #fff; white-space: nowrap; }
.start { width: 48px; display: flex; align-items: center; justify-content: center; }
.win { width: 16px; height: 16px; }
.find { width: 22px; height: 22px; }
.apps-row { display: flex; gap: 1px; margin-left: 3px; }
.app { width: 48px; height: 40px; display: flex; align-items: center; justify-content: center; }
.app svg { width: 24px; height: 24px; }
.app.running { background: linear-gradient(#76b9ed, #76b9ed) 4px bottom / 40px 2px no-repeat; }
.app.current { background: #575757; border-bottom: 2px solid #76b9ed; padding-top: 2px; }
.tray { margin-left: auto; display: flex; align-items: center; }
.t-chev { width: 13px; height: 8px; margin-right: 10px; }
.t-sync { width: 17px; height: 16px; margin-right: 7px; }
.t-batt { width: 17px; height: 13px; margin-right: 10px; }
.t-wifi { width: 13px; height: 13px; margin: 3px 8px 0 0; }
.t-vol { width: 17px; height: 14px; margin-right: 9px; }
.lang { width: 37px; font-size: 11.400px; letter-spacing: -.1px; line-height: 18px; margin-top: -1px; }
.datetime { display: flex; flex-direction: column; align-items: center; width: 58px; font-size: 11.400px; line-height: 18px; }
.t-note { width: 17px; height: 16px; margin: 0 19px 0 17px; }
.peek { width: 1px; height: 40px; background: #777; margin-right: 4px; }
</style>
